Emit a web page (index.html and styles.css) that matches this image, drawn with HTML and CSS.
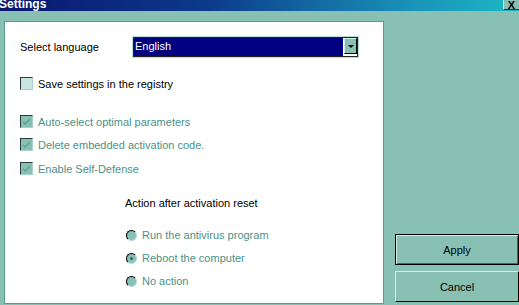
FILE: index.html
```html
<!DOCTYPE html>
<html>
<head>
<meta charset="utf-8">
<link rel="stylesheet" href="styles.css">
</head>
<body>
<div class="titlebar">
  <span class="title">Settings</span>
  <span class="close">X</span>
</div>
<div class="main">
  <div class="panel">
    <div class="lang-row">
      <span class="label">Select language</span>
      <div class="select">
        <div class="select-value">English</div>
        <div class="select-btn"><span class="tri"></span></div>
      </div>
    </div>
    <div class="check-row first">
      <span class="box"></span>
      <span class="text dark">Save settings in the registry</span>
    </div>
    <div class="group">
      <div class="check-row">
        <span class="box checked"><svg width="11" height="11" viewBox="0 0 11 11"><path d="M2 5 L4 7 L9 2 L9 4 L4 9 L2 7 Z" fill="#5aa296"/></svg></span>
        <span class="text">Auto-select optimal parameters</span>
      </div>
      <div class="check-row">
        <span class="box checked"><svg width="11" height="11" viewBox="0 0 11 11"><path d="M2 5 L4 7 L9 2 L9 4 L4 9 L2 7 Z" fill="#5aa296"/></svg></span>
        <span class="text">Delete embedded activation code.</span>
      </div>
      <div class="check-row">
        <span class="box checked"><svg width="11" height="11" viewBox="0 0 11 11"><path d="M2 5 L4 7 L9 2 L9 4 L4 9 L2 7 Z" fill="#5aa296"/></svg></span>
        <span class="text">Enable Self-Defense</span>
      </div>
    </div>
    <div class="action">
      <div class="action-title">Action after activation reset</div>
      <div class="radio-row"><span class="radio"></span><span class="text">Run the antivirus program</span></div>
      <div class="radio-row"><span class="radio on"></span><span class="text">Reboot the computer</span></div>
      <div class="radio-row"><span class="radio"></span><span class="text">No action</span></div>
    </div>
  </div>
  <div class="buttons">
    <div class="btn default">Apply</div>
    <div class="btn">Cancel</div>
  </div>
</div>
</body>
</html>
```
FILE: styles.css
```css
html, body {
  margin: 0;
  padding: 0;
}
body {
  width: 519px;
  height: 305px;
  overflow: hidden;
  background: #88c0b4;
  font-family: "Liberation Sans", Arial, sans-serif;
  font-size: 11px;
  color: #000;
}
.titlebar {
  height: 11px;
  background: linear-gradient(to right, #0a1670 0%, #0c3a8a 40%, #1a94b8 80%, #1ab8c6 100%);
  display: flex;
  justify-content: space-between;
  align-items: flex-start;
  overflow: hidden;
}
.title {
  color: #fff;
  font-weight: bold;
  font-size: 12px;
  line-height: 12px;
  margin-top: -2px;
  margin-left: -1px;
}
.close {
  width: 15px;
  height: 9px;
  background: #88c0b4;
  border-bottom: 1px solid #1a3a36;
  border-left: 1px solid #d8efe9;
  font-size: 11px;
  font-weight: bold;
  line-height: 10px;
  text-align: center;
  color: #000;
  overflow: hidden;
}
.main {
  display: flex;
  align-items: flex-start;
}
.panel {
  margin-left: 4px;
  margin-top: 10px;
  width: 366px;
  height: 281px;
  background: #fff;
  border: 1px solid #5a9c90;
  padding-left: 15px;
  box-sizing: content-box;
}
.lang-row {
  display: flex;
  align-items: center;
  margin-top: 15px;
  height: 20px;
}
.label {
  width: 112px;
}
.select {
  display: flex;
  width: 221px;
  height: 16px;
  border: 1px solid #b8ded6;
  box-shadow: inset 0 0 0 1px #222;
  padding: 2px;
  background: #fff;
}
.select-value {
  flex: 1;
  background: #000080;
  color: #fff;
  line-height: 16px;
  padding-left: 1px;
  margin: -1px 1px -1px -1px;
}
.select-btn {
  width: 13px;
  height: 16px;
  margin: -1px -1px -1px 0;
  background: #88c0b4;
  border-top: 1px solid #d8efe9;
  border-left: 1px solid #d8efe9;
  border-right: 1px solid #000;
  border-bottom: 1px solid #000;
  box-sizing: border-box;
  display: flex;
  align-items: center;
  justify-content: center;
}
.tri {
  width: 0;
  height: 0;
  border-left: 3px solid transparent;
  border-right: 3px solid transparent;
  border-top: 3px solid #000;
  margin-top: 1px;
}
.check-row {
  display: flex;
  align-items: center;
  height: 13px;
  margin-bottom: 10px;
}
.check-row.first {
  margin-top: 20px;
  margin-bottom: 25px;
}
.group .check-row:nth-child(2) {
  margin-bottom: 11px;
}
.box {
  width: 13px;
  height: 13px;
  box-sizing: border-box;
  background: #c8e6de;
  border-top: 1px solid #2a3a38;
  border-left: 1px solid #2a3a38;
  border-right: 1px solid #a8d2c8;
  border-bottom: 1px solid #a8d2c8;
  margin-right: 5px;
  display: flex;
  align-items: center;
  justify-content: center;
}
.box.checked {
  background: #88c0b4;
}
.text {
  color: #4a9286;
}
.text.dark {
  color: #000;
}
.action {
  padding-left: 105px;
  margin-top: 21px;
}
.action-title {
  height: 14px;
  line-height: 14px;
  margin-bottom: 19px;
}
.radio-row {
  display: flex;
  align-items: center;
  height: 12px;
  margin-bottom: 11px;
}
.radio {
  width: 11px;
  height: 11px;
  box-sizing: border-box;
  border-radius: 50%;
  background: #88c0b4;
  border-top: 1px solid #000;
  border-left: 1px solid #000;
  border-right: 1px solid #b8ded6;
  border-bottom: 1px solid #b8ded6;
  margin-left: 1px;
  margin-right: 5px;
  display: flex;
  align-items: center;
  justify-content: center;
}
.radio.on::after {
  content: "";
  width: 3px;
  height: 3px;
  border-radius: 50%;
  background: #2e6e64;
}
.buttons {
  margin-left: 11px;
  margin-top: 223px;
  display: flex;
  flex-direction: column;
  gap: 6px;
}
.btn {
  width: 124px;
  height: 31px;
  box-sizing: border-box;
  background: #88c0b4;
  border-top: 1px solid #d8efe9;
  border-left: 1px solid #d8efe9;
  border-right: 1px solid #000;
  border-bottom: 1px solid #000;
  display: flex;
  align-items: center;
  justify-content: center;
  font-size: 11px;
}
.btn.default {
  border: 1px solid #000;
  box-shadow: inset 1px 1px 0 #d8efe9, inset -1px -1px 0 #3a6a62;
}
```
